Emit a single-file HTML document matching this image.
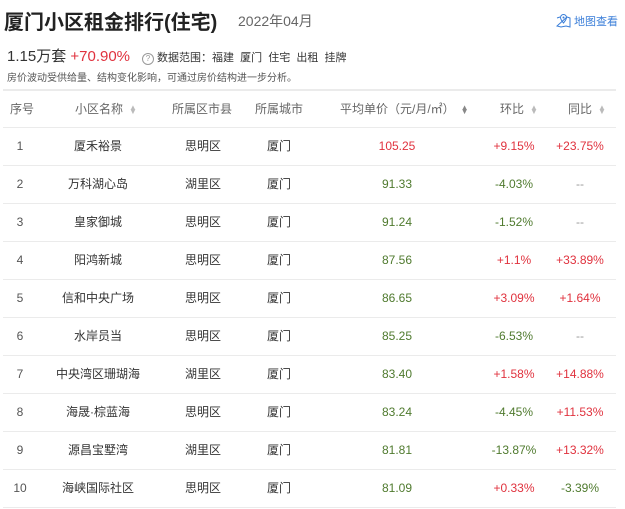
<!DOCTYPE html>
<html><head><meta charset="utf-8"><style>
body{margin:0;width:625px;height:509px;background:#fff;font-family:"Liberation Sans","Noto Sans CJK SC",sans-serif;color:#333;position:relative;overflow:hidden}
.a{position:absolute;white-space:nowrap}
.c{position:absolute;transform:translateX(-50%);white-space:nowrap;font-size:12px;line-height:14px}
.line{position:absolute;left:3px;width:613px;height:1px;background:#ebebeb}
.r{color:#e0323e}.g{color:#4f7a2e}
.s{display:inline-block;font-size:8px;color:#bbb;vertical-align:middle;margin-left:6px;line-height:4px}
</style></head><body>
<div class="a" style="left:4px;top:6px;font-size:20px;font-weight:bold;color:#222">厦门小区租金排行(住宅)</div>
<div class="a" style="left:238px;top:11px;font-size:14px;color:#666">2022年04月</div>
<div class="a" style="left:556px;top:13px;font-size:11px;color:#3a7ed8"><svg width="15" height="15" viewBox="0 0 15 15" style="vertical-align:-3px;margin-right:3px"><path d="M1 5 L4 4 M11 4 L14 5 L14 14 L10 13 L5 14 L1 13 Z" fill="none" stroke="#3a7ed8" stroke-width="1"/><path d="M7.5 10 C5 7 4.5 6 4.5 4.5 A3 3 0 0 1 10.5 4.5 C10.5 6 10 7 7.5 10Z" fill="none" stroke="#3a7ed8"/><circle cx="7.5" cy="4.5" r="1" fill="#3a7ed8"/></svg>地图查看</div>
<div class="a" style="left:7px;top:45px;font-size:15px;color:#333">1.15万套 <span class="r">+70.90%</span></div>
<div class="a" style="left:142px;top:49px;font-size:11px;color:#333"><span style="display:inline-block;width:10px;height:10px;border:1px solid #999;border-radius:50%;font-size:8px;line-height:10px;text-align:center;color:#999;margin-right:3px">?</span>数据范围：福建&nbsp;&nbsp;厦门&nbsp;&nbsp;住宅&nbsp;&nbsp;出租&nbsp;&nbsp;挂牌</div>
<div class="a" style="left:7px;top:69px;font-size:10px;color:#555">房价波动受供给量、结构变化影响，可通过房价结构进一步分析。</div>
<div class="line" style="top:89px;height:2px"></div>
<div style="position:absolute;top:100px;left:0;width:625px;color:#666;font-size:12px">
<div class="a" style="left:10px">序号</div>
<div class="a" style="left:75px">小区名称<span class="s">▲<br>▼</span></div>
<div class="a" style="left:172px">所属区市县</div>
<div class="a" style="left:255px">所属城市</div>
<div class="a" style="left:340px">平均单价（元/月/㎡）<span class="s" style="color:#888">▲<br>▼</span></div>
<div class="a" style="left:500px">环比<span class="s">▲<br>▼</span></div>
<div class="a" style="left:568px">同比<span class="s">▲<br>▼</span></div>
</div>
<div class="line" style="top:127px"></div>
<div id="rows"></div>
<script>
var d=[["1","厦禾裕景","思明区","105.25","+9.15%","+23.75%"],["2","万科湖心岛","湖里区","91.33","-4.03%","--"],["3","皇家御城","思明区","91.24","-1.52%","--"],["4","阳鸿新城","思明区","87.56","+1.1%","+33.89%"],["5","信和中央广场","思明区","86.65","+3.09%","+1.64%"],["6","水岸员当","思明区","85.25","-6.53%","--"],["7","中央湾区珊瑚海","湖里区","83.40","+1.58%","+14.88%"],["8","海晟·棕蓝海","思明区","83.24","-4.45%","+11.53%"],["9","源昌宝墅湾","湖里区","81.81","-13.87%","+13.32%"],["10","海峡国际社区","思明区","81.09","+0.33%","-3.39%"]];
var h="";
function cl(v){return v=="--"?"color:#999":(v[0]=="+"?"color:#e0323e":"color:#4f7a2e")}
d.forEach(function(r,i){var t=127+38*i+12, u=t;
h+='<div class="c" style="left:20px;top:'+t+'px;color:#555">'+r[0]+'</div>';
h+='<div class="c" style="left:98px;top:'+u+'px">'+r[1]+'</div>';
h+='<div class="c" style="left:203px;top:'+u+'px">'+r[2]+'</div>';
h+='<div class="c" style="left:279px;top:'+u+'px">厦门</div>';
h+='<div class="c" style="left:397px;top:'+t+'px;'+(i==0?'color:#e0323e':'color:#4f7a2e')+'">'+r[3]+'</div>';
h+='<div class="c" style="left:514px;top:'+t+'px;'+cl(r[4])+'">'+r[4]+'</div>';
h+='<div class="c" style="left:580px;top:'+t+'px;'+cl(r[5])+'">'+r[5]+'</div>';
h+='<div class="line" style="top:'+(127+38*(i+1))+'px"></div>';});
document.getElementById("rows").innerHTML=h;
</script>
</body></html>
